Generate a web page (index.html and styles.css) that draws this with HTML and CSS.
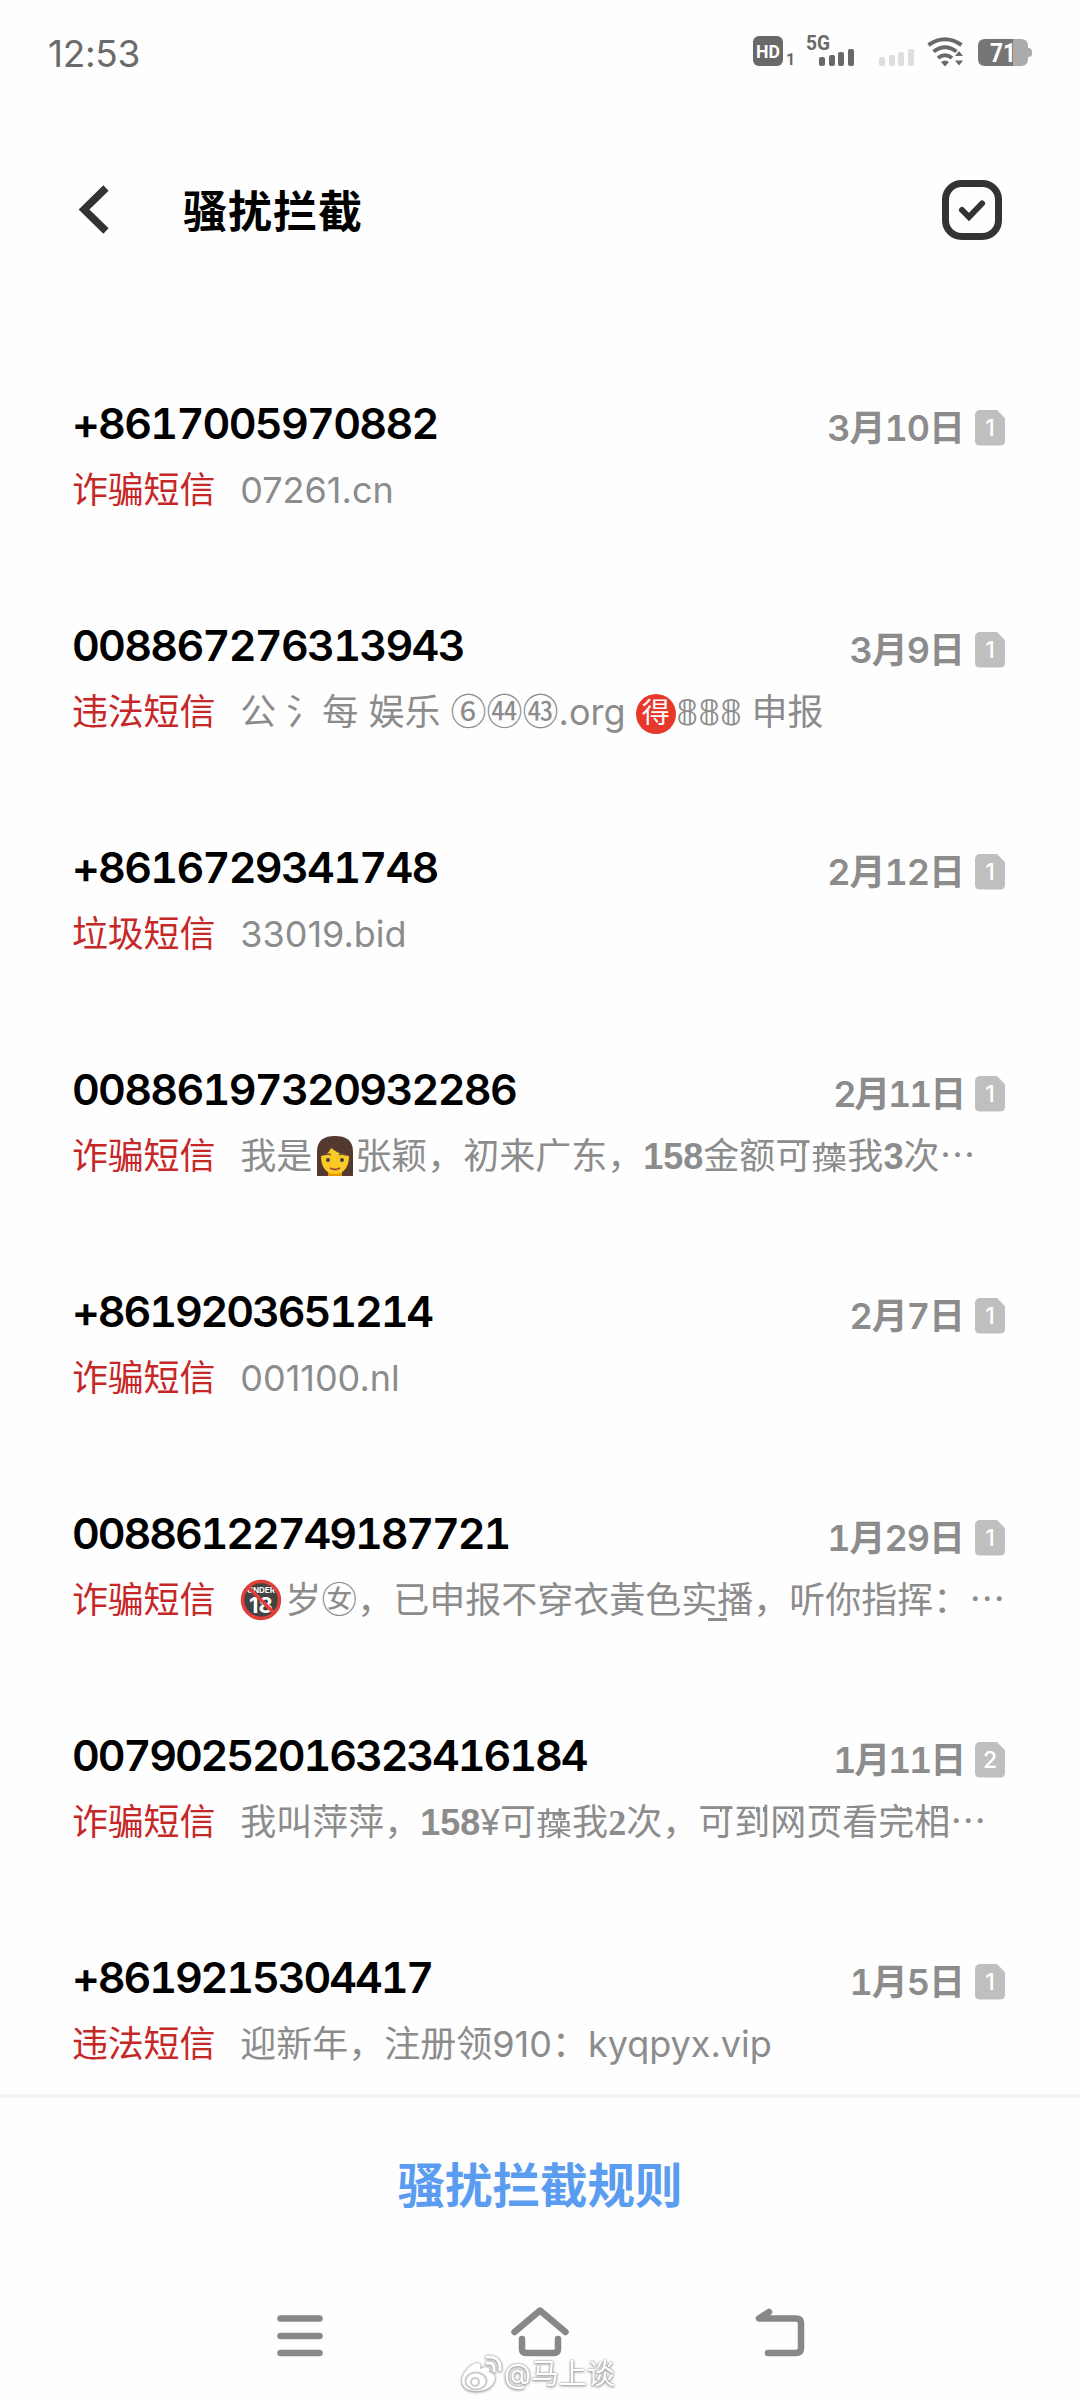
FILE: index.html
```html
<!DOCTYPE html>
<html lang="zh-CN">
<head>
    <meta charset="UTF-8">
    <meta name="viewport" content="width=device-width, initial-scale=1.0">
    <title>骚扰拦截</title>
    <link rel="stylesheet" href="styles.css">
</head>
<body>

<div class="status-bar">
    <span class="clock">12:53</span>
    <svg class="status-icons" width="290" height="40" viewBox="0 0 290 40">
        <rect x="3" y="4" width="30" height="30" rx="6" fill="#696969"/>
        <text class="hd" x="18" y="26" text-anchor="middle" textLength="24" lengthAdjust="spacingAndGlyphs">HD</text>
        <text class="sim" x="36" y="33">1</text>
        <text class="net" x="56" y="18" textLength="24" lengthAdjust="spacingAndGlyphs">5G</text>
        <g fill="#696969">
            <rect x="69" y="25" width="6" height="9" rx="2"/>
            <rect x="79" y="23" width="6" height="11" rx="2"/>
            <rect x="88" y="20" width="6" height="14" rx="2"/>
            <rect x="98" y="17" width="6" height="17" rx="2"/>
        </g>
        <g fill="#dedede">
            <rect x="129" y="25" width="6" height="9" rx="2"/>
            <rect x="139" y="23" width="6" height="11" rx="2"/>
            <rect x="148" y="20" width="6" height="14" rx="2"/>
            <rect x="158" y="17" width="6" height="17" rx="2"/>
        </g>
        <g fill="none" stroke="#696969" stroke-width="4">
            <path d="M178.500 13Q195 1.500 211.500 13"/>
            <path d="M183.500 19.500Q195 11 206.500 19.500"/>
            <path d="M188 26Q195 20.500 202 26"/>
        </g>
        <path d="M191 30q4-3 8 0l-4 4.500zM205 24l4-5 4 5zM205 28.500h8l-4 5z" fill="#696969"/>
        <path d="M263 7h8q7 0 7 7v2q4 0 4 4v2q0 3-4 3v2q0 7-7 7h-8z" fill="#aaa"/>
        <path d="M235 7h28v27h-28q-7 0-7-7v-13q0-7 7-7z" fill="#757575"/>
        <text class="battery" x="240" y="30" textLength="26" lengthAdjust="spacingAndGlyphs">71</text>
    </svg>
</div>

<header>
    <svg class="back" width="32" height="50" viewBox="0 0 32 50">
        <path d="M29 3L7 24.500 29 46" fill="none" stroke="#333" stroke-width="7.500"/>
    </svg>
    <h1>骚扰拦截</h1>
    <svg class="select" width="60" height="60" viewBox="0 0 60 60" fill="none" stroke="#333">
        <rect x="3.500" y="3.500" width="53" height="53" rx="16" stroke-width="7"/>
        <path d="M20 30l7 7 13-13.500" stroke-width="6" stroke-linecap="round"/>
    </svg>
</header>

<main>
    <div class="message">
        <div class="line">
            <h2>+8617005970882</h2>
            <span class="date">3月10日</span><span class="card">1</span>
        </div>
        <p><span class="tag">诈骗短信</span><span class="text">07261.cn</span></p>
    </div>
    <div class="message">
        <div class="line">
            <h2>008867276313943</h2>
            <span class="date">3月9日</span><span class="card">1</span>
        </div>
        <p><span class="tag">违法短信</span><span class="text">公 氵每 娱乐 <span class="circled">⑥㊹㊸</span>.org <span class="advantage">得</span><span class="double">𝟠𝟠𝟠</span> 申报</span></p>
    </div>
    <div class="message">
        <div class="line">
            <h2>+8616729341748</h2>
            <span class="date">2月12日</span><span class="card">1</span>
        </div>
        <p><span class="tag">垃圾短信</span><span class="text">33019.bid</span></p>
    </div>
    <div class="message">
        <div class="line">
            <h2>00886197320932286</h2>
            <span class="date narrow">2月11日</span><span class="card">1</span>
        </div>
        <p><span class="tag">诈骗短信</span><span class="text">我是<svg class="emoji woman" width="38" height="42" viewBox="0 0 38 42">
            <path d="M1 41V17C1 5 8 1 19 1s18 4 18 16v24z" fill="#543930"/>
            <path d="M12 32h14v9H12z" fill="#e59600"/>
            <path d="M5 21q7-1 10-8 9 7 18 8c0 12-6 18-14 18S5 33 5 21z" fill="#fbc925"/>
            <circle cx="12" cy="25" r="2" fill="#404040"/><circle cx="26" cy="25" r="2" fill="#404040"/>
            <path d="M9 20q3-2 6 0M23 20q3-2 6 0" fill="none" stroke="#6d4c41" stroke-width="1.500"/>
            <path d="M14 33q5 3 10 0" fill="none" stroke="#a84b35" stroke-width="2"/>
        </svg>张颖，初来广东，<b>158</b>金额<span class="tick">可</span><span class="grass">操</span><span class="tick">我</span><b>3</b>次⋯</span></p>
    </div>
    <div class="message">
        <div class="line">
            <h2 class="narrow">+8619203651214</h2>
            <span class="date">2月7日</span><span class="card">1</span>
        </div>
        <p><span class="tag">诈骗短信</span><span class="text">001100.nl</span></p>
    </div>
    <div class="message">
        <div class="line">
            <h2 class="narrow">00886122749187721</h2>
            <span class="date">1月29日</span><span class="card">1</span>
        </div>
        <p><span class="tag">诈骗短信</span><span class="text"><svg class="emoji ban" width="42" height="42" viewBox="0 0 42 42">
            <circle cx="21" cy="21" r="18" fill="#424242"/>
            <text class="under" x="21" y="14" text-anchor="middle">UNDER</text>
            <text class="age" x="21" y="34" text-anchor="middle">18</text>
            <circle cx="21" cy="21" r="18.500" fill="none" stroke="#e0403a" stroke-width="3.500"/>
            <path d="M8 8l26 26" stroke="#e0403a" stroke-width="3.500"/>
        </svg>岁㊛，已申报不穿衣黃色实<span class="mark">播</span>，听你指挥：⋯</span></p>
    </div>
    <div class="message">
        <div class="line">
            <h2 class="narrow">00790252016323416184</h2>
            <span class="date narrow">1月11日</span><span class="card">2</span>
        </div>
        <p><span class="tag">诈骗短信</span><span class="text">我叫萍萍，<b>158</b>¥可<span class="grass">操</span>我<b class="serif">2</b>次，<span class="tick">可</span><span class="tick">到</span><span class="tick">网</span><span class="tick">页</span>看<span class="tick">完</span><span class="tick">相</span>⋯</span></p>
    </div>
    <div class="message">
        <div class="line">
            <h2 class="narrow">+8619215304417</h2>
            <span class="date">1月5日</span><span class="card">1</span>
        </div>
        <p><span class="tag">违法短信</span><span class="text">迎新年，注册领910：kyqpyx.vip</span></p>
    </div>
</main>

<footer>
    <a href="#">骚扰拦截规则</a>
    <nav>
        <svg width="60" height="60" viewBox="0 0 60 60">
            <path d="M10.500 13.500h39M10.500 31h39M10.500 48h39"/>
        </svg>
        <svg width="60" height="60" viewBox="0 0 60 60">
            <path d="M4.500 27L30 5.500 55.500 27M12 34v10q0 4 4 4h28q4 0 4-4V34"/>
        </svg>
        <svg width="60" height="60" viewBox="0 0 60 60">
            <path d="M19 7L9 13.500h37q5 0 5 5V43q0 5-5 5H18"/>
        </svg>
    </nav>
    <div class="watermark">
        <svg width="42" height="40" viewBox="0 0 42 40">
            <path d="M2 27C2 18 13 8 18 9c4 1 2 5 2 6 5-3 11-2 9 3 8 2 7 9 2 14-8 8-29 7-29-5z" fill="#fff"/>
            <ellipse cx="16" cy="27" rx="10.500" ry="8.500" fill="none" stroke="#ccc" stroke-width="2"/>
            <circle cx="15" cy="28" r="4" fill="none" stroke="#ccc" stroke-width="2"/>
            <path d="M27 9q8-1 7 8M27 3q14-1 13 13" fill="none" stroke="#fff" stroke-width="3" stroke-linecap="round"/>
        </svg>
        <span>@马上谈</span>
    </div>
</footer>

</body>
</html>
```
FILE: styles.css
```css
/* General Styles */
body {
    font-family: 'Inter', 'Noto Sans CJK SC', sans-serif;
    margin: 0;
    background: #fefefe;
    display: flex;
    flex-direction: column;
    height: 2400px;
    overflow: hidden;
}
h1, h2, p {
    margin: 0;
}
.status-bar {
    display: flex;
    justify-content: space-between;
    height: 40px;
    padding: 32px 40px 0 48px;
}
.clock {
    font-size: 37px;
    line-height: 43px;
    letter-spacing: -0.3px;
    color: #6b6b6b;
}
.hd, .sim, .net, .battery {
    font-family: 'Roboto', sans-serif;
    font-weight: bold;
    fill: #696969;
}
.hd {
    font-size: 19px;
    fill: white;
}
.sim {
    font-size: 16px;
}
.net {
    font-size: 20px;
}
.battery {
    font-size: 25px;
    fill: white;
}
header {
    display: flex;
    align-items: center;
    height: 60px;
    padding: 108px 78px 0 77px;
}
header h1 {
    margin-left: 74px;
    padding-top: 4px;
    flex-grow: 1;
    font-size: 44px;
    line-height: 60px;
    letter-spacing: 1px;
    font-weight: bold;
}
main {
    padding: 153px 73px 0 72px;
    height: 1701px;
}
.message {
    height: 222px;
}
.line {
    display: flex;
    align-items: center;
    height: 60px;
}
.line h2 {
    flex-grow: 1;
    font-size: 43px;
    font-weight: 600;
    line-height: 60px;
    font-variant-numeric: tabular-nums;
    letter-spacing: -1.7px;
}
.line h2.narrow {
    letter-spacing: -2.1px;
}
.date {
    font-size: 36px;
    font-weight: 600;
    color: #8c8c8c;
    padding-top: 4px;
    font-variant-numeric: tabular-nums;
    letter-spacing: -1px;
}
.date.narrow {
    letter-spacing: -2.2px;
}
.card {
    width: 30px;
    height: 36px;
    margin: 9px 2px 0 11px;
    background: #bfbfbf;
    border-radius: 5px;
    clip-path: polygon(0 0, 72% 0, 100% 24%, 100% 100%, 0 100%);
    color: white;
    font-size: 23px;
    font-weight: 500;
    line-height: 36px;
    text-align: center;
}
.message p {
    display: flex;
    font-size: 36px;
    height: 60px;
    line-height: 60px;
    margin-top: 7px;
    white-space: nowrap;
    color: #8c8c8c;
}
.tag {
    color: #c62828;
    margin-right: 25px;
    letter-spacing: -0.2px;
}
.text span, .text b {
    line-height: 1;
}
.text b {
    font-family: 'Liberation Sans', sans-serif;
}
.text .serif {
    font-family: 'Liberation Serif', serif;
}
.double {
    font-family: 'DejaVu Sans', sans-serif;
    letter-spacing: -1px;
}
.circled {
    font-family: 'Noto Sans CJK SC', sans-serif;
}
.text .advantage {
    display: inline-block;
    width: 40px;
    height: 40px;
    border-radius: 50%;
    background: #e8382b;
    color: white;
    font-size: 28px;
    line-height: 38px;
    text-align: center;
    vertical-align: 2px;
}
.emoji {
    vertical-align: -8px;
}
.woman {
    margin: 0 1px 0 4px;
}
.ban {
    margin-right: 3px;
}
.under {
    font-size: 8px;
    font-weight: bold;
    fill: white;
}
.age {
    font-size: 22px;
    font-weight: bold;
    fill: white;
}
.mark, .tick {
    position: relative;
}
.mark::before {
    content: '';
    position: absolute;
    left: -9px;
    bottom: 1px;
    width: 19px;
    height: 3px;
    background: #8c8c8c;
}
/* Small stroke over the character */
.tick::before {
    content: '';
    position: absolute;
    right: 5px;
    top: 7px;
    width: 5px;
    height: 5px;
    border: solid #8c8c8c;
    border-width: 0 2px;
}
/* Squeezed character with a grass radical on top */
.grass {
    display: inline-block;
    position: relative;
    transform: scaleY(0.76);
    transform-origin: bottom;
}
.grass::before {
    content: '艹';
    position: absolute;
    left: 0;
    top: -8px;
}
footer {
    position: relative;
    flex-grow: 1;
    border-top: 4px solid #f4f4f4;
    text-align: center;
}
footer a {
    display: block;
    margin-top: 55px;
    font-size: 47.500px;
    line-height: 66px;
    font-weight: bold;
    color: #5a9cf0;
    text-decoration: none;
}
nav {
    display: flex;
    justify-content: space-between;
    padding: 0 270px;
    margin-top: 86px;
}
nav svg {
    fill: none;
    stroke: #888;
    stroke-width: 6.500;
    stroke-linecap: round;
    stroke-linejoin: round;
}
.watermark {
    position: absolute;
    left: 460px;
    bottom: 6px;
    display: flex;
    align-items: center;
    color: white;
    font-size: 28px;
    line-height: 40px;
    filter: drop-shadow(0 0 1px #999) drop-shadow(0 1px 1px #aaa);
}
.watermark span {
    margin-left: 2px;
}
```
